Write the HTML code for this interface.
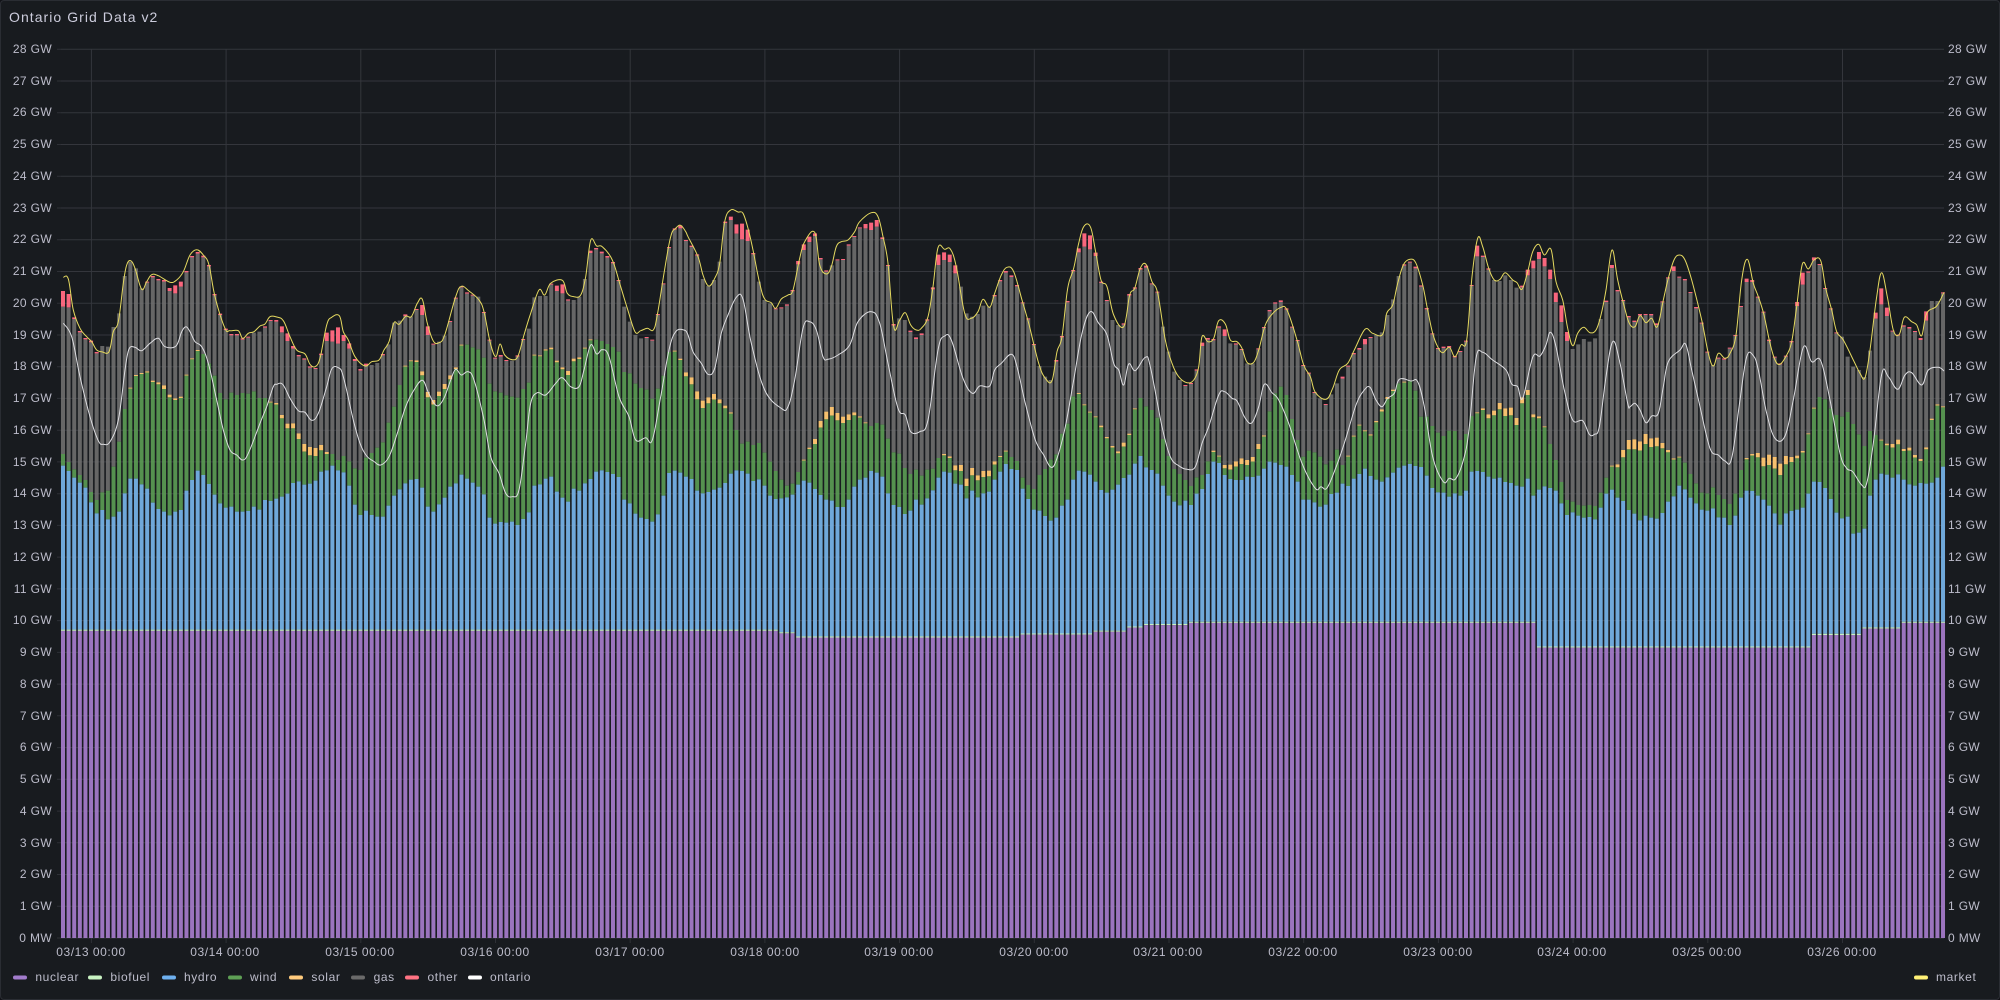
<!DOCTYPE html>
<html>
<head>
<meta charset="utf-8">
<title>Ontario Grid Data v2</title>
<style>
html,body{margin:0;padding:0;background:#111217;width:2000px;height:1000px;overflow:hidden}
#panel{position:absolute;left:0;top:0;width:1998px;height:998px;background:#181b1f;border:1px solid #2a2d33;border-radius:4px}
svg{position:absolute;left:0;top:0}
text{font-family:"Liberation Sans",sans-serif;font-size:12px;letter-spacing:.35px;fill:#bdbdcb}
.l text{text-anchor:end}
.x text{text-anchor:middle;letter-spacing:.55px}
.k text{letter-spacing:.62px}
.t{font-size:14px;letter-spacing:1.05px;fill:#ccccdc}
</style>
</head>
<body>
<div id="panel"></div>
<svg width="2000" height="1000" viewBox="0 0 2000 1000" xmlns="http://www.w3.org/2000/svg">
<g id="grid" stroke="rgba(204,204,220,.12)" stroke-width="1" fill="none"></g>
<g id="bars"></g>
<g id="grid2" stroke="rgba(204,204,220,.04)" stroke-width="1" fill="none"></g>
<path id="ont" fill="none" stroke="#dedee2" stroke-width="1"></path>
<path id="mkt" fill="none" stroke="#e6da60" stroke-width="1"></path>

<text class="t" x="9" y="22">Ontario Grid Data v2</text>

<g class="l">
<text x="52" y="53">28 GW</text><text x="52" y="85">27 GW</text><text x="52" y="116">26 GW</text><text x="52" y="148">25 GW</text><text x="52" y="180">24 GW</text><text x="52" y="212">23 GW</text><text x="52" y="243">22 GW</text><text x="52" y="275">21 GW</text><text x="52" y="307">20 GW</text><text x="52" y="339">19 GW</text><text x="52" y="370">18 GW</text><text x="52" y="402">17 GW</text><text x="52" y="434">16 GW</text><text x="52" y="466">15 GW</text><text x="52" y="497">14 GW</text><text x="52" y="529">13 GW</text><text x="52" y="561">12 GW</text><text x="52" y="593">11 GW</text><text x="52" y="624">10 GW</text><text x="52" y="656">9 GW</text><text x="52" y="688">8 GW</text><text x="52" y="720">7 GW</text><text x="52" y="751">6 GW</text><text x="52" y="783">5 GW</text><text x="52" y="815">4 GW</text><text x="52" y="847">3 GW</text><text x="52" y="878">2 GW</text><text x="52" y="910">1 GW</text><text x="52" y="942">0 MW</text>
</g>
<g>
<text x="1948" y="53">28 GW</text><text x="1948" y="85">27 GW</text><text x="1948" y="116">26 GW</text><text x="1948" y="148">25 GW</text><text x="1948" y="180">24 GW</text><text x="1948" y="212">23 GW</text><text x="1948" y="243">22 GW</text><text x="1948" y="275">21 GW</text><text x="1948" y="307">20 GW</text><text x="1948" y="339">19 GW</text><text x="1948" y="370">18 GW</text><text x="1948" y="402">17 GW</text><text x="1948" y="434">16 GW</text><text x="1948" y="466">15 GW</text><text x="1948" y="497">14 GW</text><text x="1948" y="529">13 GW</text><text x="1948" y="561">12 GW</text><text x="1948" y="593">11 GW</text><text x="1948" y="624">10 GW</text><text x="1948" y="656">9 GW</text><text x="1948" y="688">8 GW</text><text x="1948" y="720">7 GW</text><text x="1948" y="751">6 GW</text><text x="1948" y="783">5 GW</text><text x="1948" y="815">4 GW</text><text x="1948" y="847">3 GW</text><text x="1948" y="878">2 GW</text><text x="1948" y="910">1 GW</text><text x="1948" y="942">0 MW</text>
</g>
<g class="x">
<text x="91" y="956">03/13 00:00</text><text x="225" y="956">03/14 00:00</text><text x="360" y="956">03/15 00:00</text><text x="495" y="956">03/16 00:00</text><text x="630" y="956">03/17 00:00</text><text x="765" y="956">03/18 00:00</text><text x="899" y="956">03/19 00:00</text><text x="1034" y="956">03/20 00:00</text><text x="1168" y="956">03/21 00:00</text><text x="1303" y="956">03/22 00:00</text><text x="1438" y="956">03/23 00:00</text><text x="1572" y="956">03/24 00:00</text><text x="1707" y="956">03/25 00:00</text><text x="1842" y="956">03/26 00:00</text>
</g>
<g class="k">
<rect x="13" y="975.5" width="14" height="4" rx="2" fill="#a27ccc"/><text x="35.4" y="981">nuclear</text>
<rect x="88" y="975.5" width="14" height="4" rx="2" fill="#c8f2c2"/><text x="110.4" y="981">biofuel</text>
<rect x="162" y="975.5" width="14" height="4" rx="2" fill="#6eb0ef"/><text x="184" y="981">hydro</text>
<rect x="228" y="975.5" width="14" height="4" rx="2" fill="#5ea055"/><text x="250" y="981">wind</text>
<rect x="289" y="975.5" width="14" height="4" rx="2" fill="#ffcb7d"/><text x="311.4" y="981">solar</text>
<rect x="351" y="975.5" width="14" height="4" rx="2" fill="#6a6a6a"/><text x="373.6" y="981">gas</text>
<rect x="405" y="975.5" width="14" height="4" rx="2" fill="#ff7383"/><text x="427.5" y="981">other</text>
<rect x="468" y="975.5" width="14" height="4" rx="2" fill="#ffffff"/><text x="490" y="981">ontario</text>
<rect x="1914" y="975.5" width="14" height="4" rx="2" fill="#fff176"/><text x="1936" y="981">market</text>
</g>
</svg>
<script>
var C=[
{s:60,
H:[797,813,833,848,863,907,940,930,958,950,935,880,836,836,853,866,908,927,935,946,935,930,872,840,812,825,852,884,910,923,920,935,935,933,920,929,900,903,896,890,881,849,844,854,851,842,815,811,797,811,817,857,914,945,932,945],
W:[762,786,808,825,840,876,900,877,872,800,725,627,566,528,522,518,546,553,567,592,600,594,527,478,453,462,490,527,579,598,578,585,579,581,574,594,594,608,614,655,685,685,717,755,766,768,751,762,762,780,768,784,805,810,773,759],
S:[0,0,0,0,0,0,0,0,0,0,0,0,3,3,3,4,4,6,11,8,5,4,3,3,3,0,0,0,0,0,0,0,0,0,0,0,0,3,5,10,14,15,17,23,25,24,16,6,0,0,0,0,0,0,0,0],
T:[273,282,352,393,414,422,456,438,440,381,340,228,185,205,265,245,228,237,240,264,256,245,213,168,156,167,195,282,341,386,402,402,415,410,398,395,379,360,360,379,400,438,465,475,499,504,461,398,391,382,405,430,477,507,491,495],
P:[47,40,5,4,4,5,4,0,0,0,0,0,0,0,0,3,4,4,5,9,24,15,4,4,5,5,4,4,4,4,4,4,4,3,0,0,4,3,5,18,23,8,4,4,4,3,4,25,34,49,18,16,6,5,6,0],
M:[10,232,25,237,40,330,60,385,80,410,95,425,110,450,125,455,147,455,160,395,175,365,190,250,200,195,212,182,225,205,245,268,260,245,275,224,295,227,330,247,350,240,370,215,390,165,410,149,430,165,447,195,465,290,495,385,510,392,535,392,548,415,565,400,582,395,600,378,615,372,630,350,650,351,670,362,690,410,710,450,735,462,750,493,765,500,780,475,800,375,815,352,838,347,850,395,865,420,885,470,915,498,935,485],
O:[10,370,35,410,60,530,90,650,115,722,130,733,150,725,175,660,195,510,207,447,225,442,245,452,270,430,295,415,315,440,348,438,365,395,378,380,390,395,405,425,425,440,445,490,470,600,490,690,510,750,530,765,548,780,565,760,600,670,620,620,640,560,650,553,668,553,690,595,715,632,735,637,755,661,775,640,800,560,815,507,835,503,850,530,880,660,900,730,920,768,940,783]},
{s:374,
H:[950,950,917,887,868,850,839,837,863,920,935,913,893,860,850,824,836,848,860,883,953,971,966,968,965,975,957,937,857,853,836,830,875,893,905,866,872,850,837,815,811,816,822,831,899,910,941,953,957,965,943,887,819,812,818,830],
W:[743,727,668,620,555,500,484,486,526,592,614,588,567,538,507,437,434,442,448,473,551,574,578,586,590,593,567,548,467,469,452,448,487,508,525,484,477,446,421,419,423,432,441,455,516,520,551,564,569,596,566,527,456,455,480,529],
S:[0,0,0,0,0,3,3,5,12,16,14,13,15,12,5,3,0,0,0,0,0,0,0,0,0,0,0,0,3,3,4,5,5,6,12,8,5,3,3,0,0,0,0,0,0,0,0,0,0,0,0,0,0,3,4,12],
T:[489,462,433,368,362,343,349,327,315,379,431,425,407,363,293,259,277,284,290,336,419,473,465,480,482,466,417,386,292,288,288,251,257,253,298,300,290,237,152,144,155,168,186,240,320,365,405,415,411,419,342,250,141,85,77,120],
P:[0,4,0,0,0,5,0,3,30,26,3,0,0,3,3,3,4,3,0,3,3,3,5,3,0,4,3,0,0,0,0,3,16,27,4,0,0,0,7,4,5,5,4,3,0,0,0,0,3,3,3,3,3,4,8,3],
M:[15,480,30,450,45,425,60,368,75,373,95,349,112,350,130,310,145,298,160,370,178,423,195,428,212,405,245,290,262,259,285,273,315,300,330,335,348,425,365,470,378,432,392,465,415,479,432,468,450,405,470,340,495,270,512,285,530,250,565,241,580,280,600,290,620,285,635,230,650,121,668,138,685,140,715,180,740,260,760,325,783,395,800,392,820,385,838,390,850,345,870,220,890,110,905,85,920,76,935,95],
O:[20,795,45,770,70,700,95,620,120,570,145,541,162,575,180,610,195,616,212,590,230,540,245,508,262,525,282,515,300,540,330,660,350,770,375,820,395,880,415,890,435,870,455,730,470,610,490,578,515,585,545,550,565,533,590,560,615,560,630,510,650,435,668,462,685,449,705,470,735,590,765,650,785,720,815,713,835,720,860,590,885,450,905,395,930,390]},
{s:688,
H:[837,872,880,876,869,863,849,821,811,813,821,843,838,857,887,897,895,892,884,854,842,848,867,885,899,902,921,921,899,860,839,833,813,818,830,880,915,921,942,932,899,914,895,871,833,815,818,851,854,895,872,892,880,875,839,815],
W:[553,598,624,610,599,610,625,641,690,731,725,735,729,758,785,813,839,857,851,816,782,747,732,683,658,647,661,669,660,646,653,670,678,669,674,716,757,761,804,822,809,827,809,806,774,766,774,811,813,858,826,841,831,829,794,771],
S:[21,24,22,18,17,12,8,4,0,0,0,0,0,0,0,0,0,0,0,0,3,4,15,20,23,26,22,19,17,9,4,3,0,0,0,0,0,0,0,0,0,0,0,0,0,4,5,15,18,22,22,15,18,17,10,3],
T:[137,163,237,258,240,185,65,50,73,71,89,159,245,300,310,325,322,313,270,183,133,110,100,174,211,196,178,177,133,108,82,72,68,60,112,195,372,355,360,392,412,400,358,262,164,157,164,196,260,340,350,342,317,320,285,240],
P:[4,4,0,0,0,0,4,10,28,47,34,4,0,0,0,3,3,4,4,10,17,16,8,4,4,0,3,3,4,3,3,13,22,20,5,3,5,0,0,4,5,5,4,6,31,23,22,24,0,0,0,0,0,0,4,4],
M:[0,110,30,170,45,225,62,258,80,235,95,190,110,65,128,30,150,36,165,40,180,85,195,150,215,250,230,297,250,308,263,325,280,297,300,285,315,270,335,175,350,125,380,97,395,195,415,222,430,200,445,140,460,125,480,120,500,95,515,65,550,38,570,50,585,110,600,190,617,380,635,360,652,338,668,375,685,390,700,385,720,350,735,260,750,143,770,148,787,147,805,200,830,340,850,355,870,335,885,298,905,322,920,280,940,225],
O:[0,405,15,455,40,490,60,523,80,505,100,400,120,345,145,292,165,298,190,430,230,570,280,625,300,620,320,540,345,385,365,365,385,390,405,470,420,478,450,465,485,435,510,365,550,335,575,370,600,490,630,625,652,645,668,695,695,695,720,660,750,450,770,408,790,420,825,535,853,580,875,558,905,558,920,510,940,490]},
{s:1002,
H:[792,807,810,866,897,929,932,948,962,953,917,899,839,812,815,824,845,870,878,869,854,834,824,791,768,802,810,821,857,887,905,916,902,915,881,867,822,785,789,825,837,840,840,830,831,827,806,785,788,795,800,825,845,899,899,907],
W:[755,771,783,833,855,867,825,807,778,763,701,671,589,582,616,638,652,682,715,743,760,740,705,628,594,619,630,653,717,768,807,822,840,858,832,825,784,756,770,805,809,800,792,795,785,747,710,634,580,560,585,657,720,770,752,757],
S:[3,0,0,0,0,0,0,0,0,0,0,0,0,3,3,3,3,5,4,5,6,12,4,3,0,0,0,0,0,0,0,0,0,0,0,0,0,4,3,10,15,16,17,15,14,15,4,0,0,0,0,0,0,0,0,0],
T:[213,226,255,307,355,432,498,530,540,480,408,303,210,145,100,106,158,245,300,360,375,370,282,262,204,197,250,275,380,455,515,540,555,549,508,428,414,417,379,388,430,430,447,490,490,445,381,330,307,301,325,380,420,495,518,576],
P:[5,5,4,3,3,3,0,0,0,5,4,4,4,12,40,42,10,4,3,0,0,4,5,4,5,6,3,3,0,0,0,0,3,3,4,10,5,4,4,20,0,4,3,0,0,3,3,4,4,5,4,3,3,3,3,3],
M:[0,222,15,202,35,215,60,300,80,370,110,490,130,535,150,542,165,455,180,410,197,265,215,205,230,130,245,80,265,80,280,150,297,240,315,260,335,345,365,380,383,285,398,265,415,205,432,193,450,245,467,280,490,420,510,490,530,530,555,548,575,540,590,500,600,410,618,425,635,415,650,362,670,372,685,420,705,425,720,445,735,487,755,487,770,450,790,375,810,343,835,323,855,330,885,420,905,495,925,530,940,577],
O:[0,488,28,463,45,500,70,610,100,720,125,765,147,802,165,775,190,680,215,540,240,400,265,335,290,370,315,405,335,490,350,510,365,555,380,492,400,512,430,472,445,500,480,680,505,770,530,797,555,808,580,800,600,730,620,680,650,585,668,575,690,595,705,603,730,655,750,668,770,620,787,553,810,578,830,600,860,670,900,790,940,865]},
{s:1316,
H:[920,914,882,878,851,858,836,822,806,828,839,845,832,818,803,797,792,798,801,827,864,877,878,890,880,887,872,815,813,816,830,836,833,846,849,857,860,836,887,869,859,864,872,910,945,937,947,953,951,958,923,881,869,893,903,930],
W:[770,793,782,749,795,770,710,677,694,707,667,635,597,573,550,548,544,572,650,650,678,698,708,692,693,720,702,648,640,630,655,646,628,648,646,675,610,585,652,655,682,732,780,846,900,905,915,917,915,918,878,833,800,802,772,748],
S:[0,0,0,0,0,3,3,3,3,4,4,7,6,4,0,3,0,0,0,0,0,0,0,0,0,0,0,0,3,5,12,14,19,23,23,21,18,15,9,6,3,0,0,0,0,0,0,0,0,0,0,0,3,9,22,28],
T:[595,612,583,550,530,497,459,444,417,411,405,397,345,298,228,193,185,200,256,324,400,444,440,438,468,453,422,255,137,167,205,240,243,226,240,263,257,209,182,156,174,209,278,316,396,447,433,417,425,415,357,302,195,270,300,348],
P:[0,3,0,0,6,3,4,5,16,3,0,0,0,0,0,4,3,5,4,4,3,3,4,5,4,3,3,3,32,4,4,0,0,0,0,0,5,17,23,21,25,28,28,50,27,0,0,0,0,0,0,4,9,4,3,4],
M:[0,578,30,598,50,565,70,510,95,490,115,450,147,388,170,400,200,403,212,340,230,315,245,250,262,195,282,178,300,190,320,255,335,330,350,400,365,440,380,458,400,442,417,470,435,435,452,420,468,230,485,115,500,140,518,205,535,240,552,238,568,218,590,240,603,248,618,268,635,215,650,155,668,133,685,165,705,148,720,245,740,300,755,385,770,437,785,400,803,382,822,398,840,390,855,345,870,270,888,150,905,240,925,320,940,370],
O:[0,865,15,860,32,865,55,815,85,730,120,615,145,570,162,562,180,600,198,620,215,595,235,580,250,538,285,543,305,545,325,620,350,770,382,845,400,835,420,835,445,770,460,680,480,475,500,457,530,480,570,510,587,552,605,560,620,595,650,472,672,468,690,435,703,397,720,440,745,570,770,660,800,662,820,703,835,703,850,680,870,530,890,425,910,480,935,610]},
{s:1630,
H:[941,961,947,953,956,939,905,889,857,868,893,910,929,932,925,952,953,975,947,893,872,873,887,899,917,940,974,940,933,929,923,881,845,846,864,897,938,955,950,1001,998,986,887,839,821,824,833,823,839,853,857,849,851,848,833,800],
W:[748,752,732,741,739,745,757,779,773,788,822,850,878,880,862,885,897,912,881,810,778,767,772,799,795,806,825,793,786,775,758,703,626,591,598,625,645,650,636,672,703,738,693,705,722,736,743,733,753,752,773,783,748,660,617,622],
S:[30,28,30,26,26,16,7,4,3,0,0,0,0,0,0,0,0,0,0,0,4,5,13,26,31,35,34,25,15,8,5,3,3,0,0,0,0,0,0,0,0,0,0,0,3,5,11,14,6,9,8,6,6,4,4,3],
T:[362,342,342,342,370,304,232,199,230,237,276,321,368,455,495,473,475,443,405,318,236,240,290,335,419,470,490,467,423,306,218,214,172,192,264,325,397,410,470,500,510,531,452,338,265,323,392,404,376,381,393,414,334,303,303,277],
P:[4,4,3,4,5,3,3,14,3,4,3,4,3,3,0,3,4,3,3,3,10,6,3,3,4,3,3,3,4,12,36,4,9,3,3,3,3,0,0,0,0,0,0,18,48,25,3,3,4,5,3,6,28,0,0,3],
M:[0,375,15,380,30,347,48,368,65,355,82,380,100,300,115,235,132,180,148,165,165,180,185,240,215,360,235,460,250,498,265,460,285,475,300,460,318,405,335,240,352,178,370,250,385,290,402,345,420,430,435,480,450,493,470,465,485,425,500,320,517,193,535,207,552,180,572,182,587,265,605,330,620,395,640,420,670,480,690,520,705,533,720,450,740,290,755,218,772,290,790,390,808,403,823,352,845,365,860,375,875,407,890,340,920,318,942,277],
O:[0,620,15,610,30,630,48,668,65,648,85,640,100,560,115,485,150,450,167,433,185,510,210,620,240,745,265,765,285,783,305,775,330,600,350,470,370,467,385,510,410,640,435,715,465,708,490,600,520,442,545,485,572,482,600,600,630,760,650,805,668,815,695,855,710,850,730,730,755,523,775,530,803,568,825,525,845,518,875,555,895,510,925,502,942,513]}
];
var NS="http://www.w3.org/2000/svg",X0=61,ST=5.612,BW=4,Y0=938,GW=31.73;
function nuc(x){
 var g;
 if(x<775)g=9.68;else if(x<795)g=9.6;else if(x<1020)g=9.47;else if(x<1090)g=9.56;else if(x<1125)g=9.65;else if(x<1140)g=9.78;else if(x<1185)g=9.86;else if(x<1532)g=9.93;else if(x<1811)g=9.15;else if(x<1862)g=9.55;else if(x<1900)g=9.75;else g=9.93;
 return Y0-g*GW;
}
var L={n:"",b:"",h:"",w:"",s:"",g:"",o:""};
function r(k,x,y1,y2){
 if(y2-y1<=0)return;
 L[k]+="M"+x.toFixed(2)+" "+y1.toFixed(2)+"h"+BW+"V"+y2.toFixed(2)+"h-"+BW+"z";
}
var mp=[],op=[];
C.forEach(function(c,ci){
 for(var k=0;k<56;k++){
  var x=X0+ST*(ci*56+k);
  if(x>1942)continue;
  var f=function(z){return 200+z/3};
  var n=nuc(x),h=f(c.H[k]),w=f(c.W[k]),ss=c.S[k]/3,t=f(c.T[k]),p=c.P[k]/3;
  r("n",x,n,Y0);
  r("b",x,n-1.2,n);
  r("h",x,h,n-1.2);
  r("w",x,w,h);
  r("s",x,w-ss,w);
  r("g",x,t+p,w-ss);
  r("o",x,t,t+p);
 }
 for(var i=0;i<c.M.length;i+=2)mp.push([c.s+c.M[i]/3,200+c.M[i+1]/3]);
 for(i=0;i<c.O.length;i+=2)op.push([c.s+c.O[i]/3,200+c.O[i+1]/3]);
});
var cols={n:"#9b74be",b:"#c8f2c2",h:"#6fa8da",w:"#55914f",s:"#f6c06e",g:"#666666",o:"#f9667d"};
var bars=document.getElementById("bars");
["g","o","s","w","h","b","n"].forEach(function(k){
 var e=document.createElementNS(NS,"path");
 e.setAttribute("d",L[k]);e.setAttribute("fill",cols[k]);bars.appendChild(e);
});
function smooth(p){
 var q=[];
 p.forEach(function(a){if(!q.length||a[0]-q[q.length-1][0]>1.5)q.push(a)});
 var d="M"+q[0][0].toFixed(1)+" "+q[0][1].toFixed(1);
 for(var i=0;i<q.length-1;i++){
  var a=q[i-1]||q[i],b=q[i],c=q[i+1],e=q[i+2]||c;
  var t=5.5;
  d+="C"+(b[0]+(c[0]-a[0])/t).toFixed(1)+" "+(b[1]+(c[1]-a[1])/t).toFixed(1)+" "+(c[0]-(e[0]-b[0])/t).toFixed(1)+" "+(c[1]-(e[1]-b[1])/t).toFixed(1)+" "+c[0].toFixed(1)+" "+c[1].toFixed(1);
 }
 return d;
}
document.getElementById("mkt").setAttribute("d",smooth(mp));
document.getElementById("ont").setAttribute("d",smooth(op));
var gd="",gd2="";
for(var i=0;i<=28;i++){
 var y=(49.3+31.74*i).toFixed(1);
 gd+="M57 "+y+"H1944";
 gd2+="M61 "+y+"H1944";
}
for(i=0;i<14;i++){
 var x=(91.4+134.7*i).toFixed(1);
 gd+="M"+x+" 49V943";
 gd2+="M"+x+" 49V938";
}
document.getElementById("grid").innerHTML='<path d="'+gd+'"/>';
document.getElementById("grid2").innerHTML='<path d="'+gd2+'"/>';
</script>
</body>
</html>
